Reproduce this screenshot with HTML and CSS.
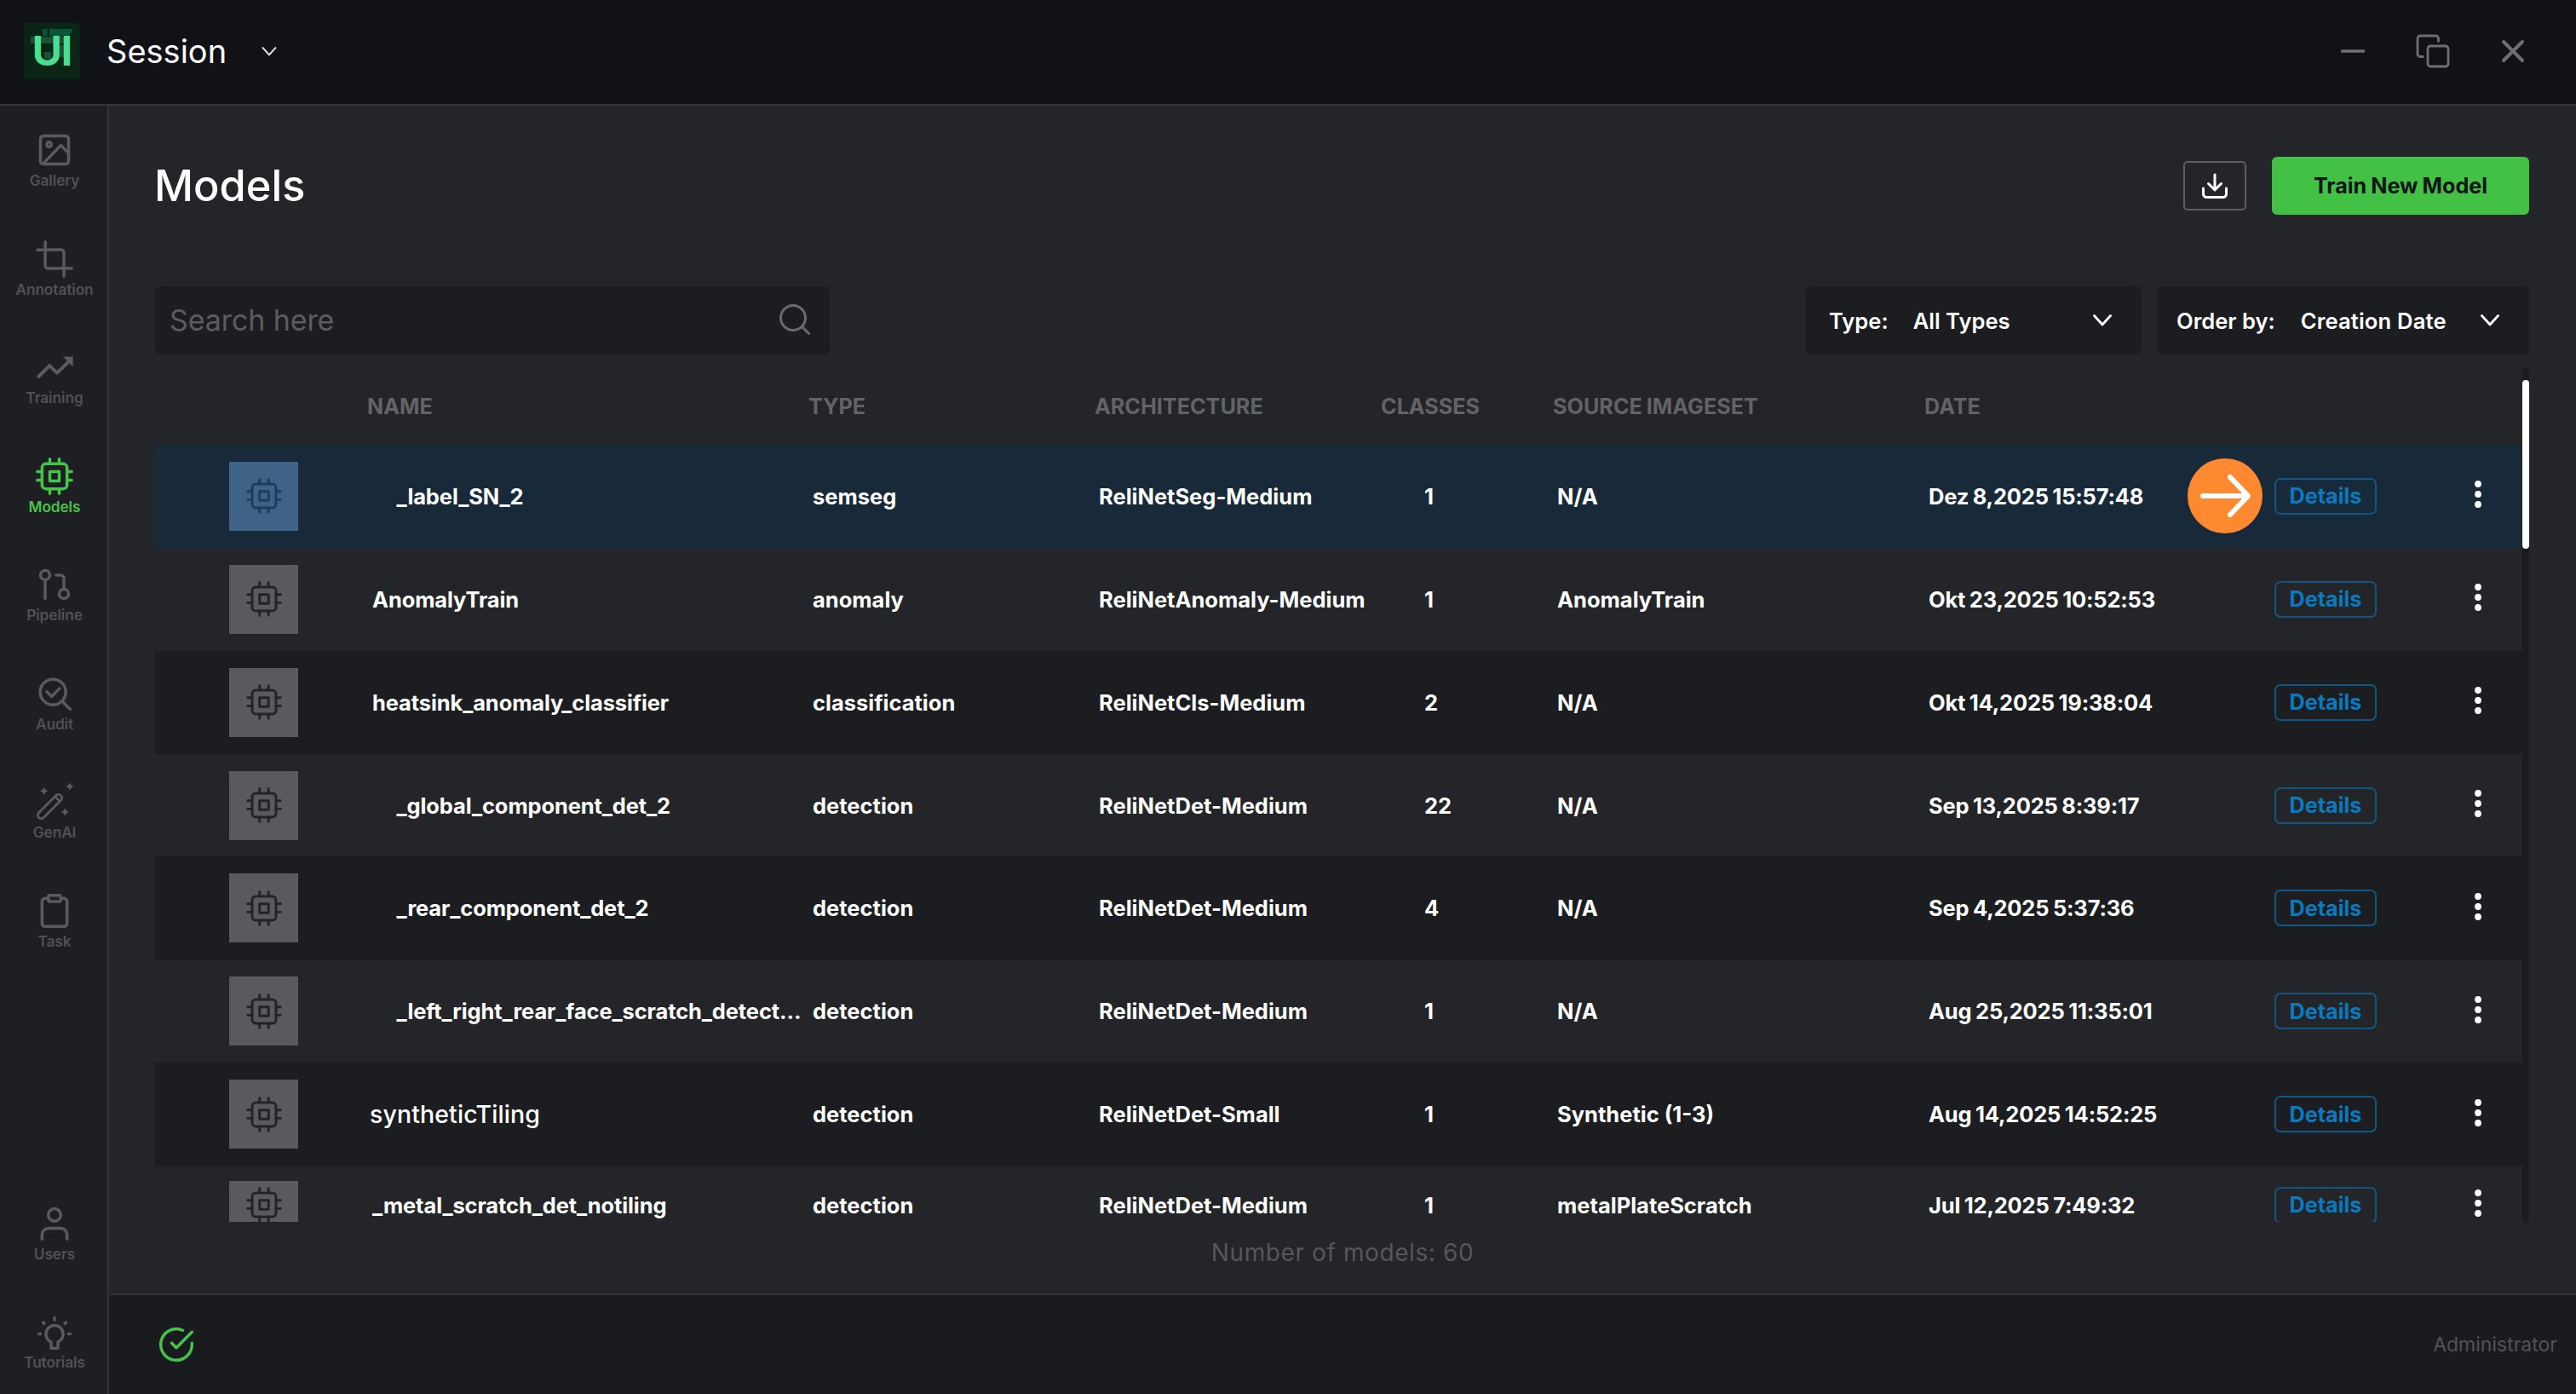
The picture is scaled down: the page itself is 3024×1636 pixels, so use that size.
FILE: index.html
```html
<!DOCTYPE html>
<html lang="en">
<head>
<meta charset="utf-8">
<title>Models</title>
<link rel="stylesheet" href="styles.css">
</head>
<body>
<svg class="defs" aria-hidden="true">
  <symbol id="cpu" viewBox="0 0 24 24"><rect x="4" y="4" width="16" height="16" rx="2.4"/><rect x="9" y="9" width="6" height="6"/><path d="M9 1v3M15 1v3M9 20v3M15 20v3M20 9h3M20 14.5h3M1 9h3M1 14.5h3"/></symbol>
  <symbol id="chevron" viewBox="0 0 22 14"><path d="M1.5 1.5 11 12l9.500-10.500"/></symbol>
  <symbol id="dots" viewBox="0 0 8 32"><circle cx="4" cy="4" r="3.900"/><circle cx="4" cy="16" r="3.900"/><circle cx="4" cy="28" r="3.900"/></symbol>
</svg>

<header class="topbar">
  <div class="logo">
    <svg class="logo-art" viewBox="0 0 66 66"><path fill="#0a5638" d="M22 7h5.500v8H22zM30 7h28l-5 8H30z"/><path fill="#1d5036" d="M8 16h46v8H8zM40 26h14v14H40zM24 34h8v8h-8z"/></svg>
    <span class="logo-text">UI</span>
  </div>
  <span class="session">Session</span>
  <svg class="session-chevron"><use href="#chevron"/></svg>
  <div class="window-buttons">
    <svg class="win-min" viewBox="0 0 28 4"><path d="M1.500 2h25"/></svg>
    <svg class="win-copy" viewBox="0 0 40 40"><rect x="14" y="14" width="24" height="24" rx="3"/><path d="M8.500 26.500H5a3 3 0 0 1-3-3V5a3 3 0 0 1 3-3h18.500a3 3 0 0 1 3 3v3.500"/></svg>
    <svg class="win-close" viewBox="0 0 28 28"><path d="M3 3l22 22M25 3 3 25"/></svg>
  </div>
</header>

<div class="body">
  <nav class="sidebar">
    <a class="nav-item"><svg viewBox="0 0 24 24"><rect x="3" y="3" width="18" height="18" rx="2"/><circle cx="8.500" cy="8.500" r="1.500"/><path d="M21 14l-5-5L5 20.500"/></svg><span>Gallery</span></a>
    <a class="nav-item"><svg viewBox="0 0 24 24"><path d="M6.130 1 6 16a2 2 0 0 0 2 2h15"/><path d="M1 6.130 16 6a2 2 0 0 1 2 2v15"/></svg><span>Annotation</span></a>
    <a class="nav-item"><svg class="trend" viewBox="0 0 24 24"><path d="M1.800 18 8.800 11l4.800 4.600L21.500 8"/><path class="solid" d="M17.300 5.200h6.500v6.500z"/></svg><span>Training</span></a>
    <a class="nav-item active"><svg viewBox="0 0 24 24"><use href="#cpu"/></svg><span>Models</span></a>
    <a class="nav-item"><svg viewBox="0 0 24 24"><circle cx="18" cy="18" r="3"/><circle cx="6" cy="6" r="3"/><path d="M13 6h3a2 2 0 0 1 2 2v7M6 9v12"/></svg><span>Pipeline</span></a>
    <a class="nav-item"><svg viewBox="0 0 24 24"><circle cx="11" cy="11" r="8.200"/><path d="M17 17l5 5M7 10.800l3.200 3 5-5"/></svg><span>Audit</span></a>
    <a class="nav-item"><svg class="wand" viewBox="0 0 24 24"><rect x="-2.200" y="-10" width="4.400" height="20" rx="2.200" transform="translate(9 15) rotate(45)"/><path d="M12.400 8.700l3.100 3.100"/><path class="solid" d="M21.800-.3l.900 1.600 1.600.900-1.600.900-.900 1.600-.900-1.600-1.600-.900 1.600-.900zM5.300 2.600l.900 1.600 1.600.900-1.600.900-.900 1.600-.900-1.600-1.600-.900 1.600-.900zM18.700 16l.900 1.600 1.600.900-1.600.900-.900 1.600-.900-1.600-1.600-.900 1.600-.900z"/></svg><span>GenAI</span></a>
    <a class="nav-item"><svg viewBox="0 0 24 24"><path d="M16 4h2a2 2 0 0 1 2 2v14a2 2 0 0 1-2 2H6a2 2 0 0 1-2-2V6a2 2 0 0 1 2-2h2"/><rect x="8" y="2" width="8" height="4" rx="1"/></svg><span>Task</span></a>
    <div class="nav-spacer"></div>
    <a class="nav-item"><svg viewBox="0 0 24 24"><path d="M20 22v-3a4 4 0 0 0-4-4H8a4 4 0 0 0-4 4v3"/><circle cx="12" cy="6.500" r="4"/></svg><span>Users</span></a>
    <a class="nav-item"><svg viewBox="0 0 24 24"><path d="M9.800 22.500v-4a5.500 5.500 0 1 1 4.400 0v4zM12 3v1.500M4.700 6l.700.700M19.300 6l-.700.700M2 13.300h1M21 13.300h1"/></svg><span>Tutorials</span></a>
  </nav>

  <div class="content">
    <main class="main">
      <div class="title-row">
        <h1>Models</h1>
        <button class="download"><svg viewBox="0 0 30 30"><path d="M15 2v17.500M7.500 12.500 15 20l7.500-7.500M1.500 18v6.500a4 4 0 0 0 4 4h19a4 4 0 0 0 4-4V18"/></svg></button>
        <button class="train">Train New Model</button>
      </div>

      <div class="toolbar">
        <div class="search"><span>Search here</span><svg viewBox="0 0 36 36"><circle cx="16" cy="16" r="14.500"/><path d="M26.500 26.500l8 8"/></svg></div>
        <div class="select type"><span class="label">Type:</span><span class="value">All Types</span><svg><use href="#chevron"/></svg></div>
        <div class="select order"><span class="label">Order by:</span><span class="value">Creation Date</span><svg><use href="#chevron"/></svg></div>
      </div>

      <div class="table">
        <div class="rows">
          <div class="row head"><span></span><span>NAME</span><span>TYPE</span><span>ARCHITECTURE</span><span>CLASSES</span><span>SOURCE IMAGESET</span><span>DATE</span></div>
          <div class="row selected">
            <div class="thumb"><svg><use href="#cpu"/></svg></div><span class="name child">_label_SN_2</span><span class="cell">semseg</span><span class="cell">ReliNetSeg-Medium</span><span class="cell count">1</span><span class="cell">N/A</span><span class="cell date">Dez 8,2025 15:57:48</span>
            <div class="action"><button class="details">Details</button><div class="pointer"><svg viewBox="0 0 60 60"><path d="M4 30h52M36 8l21 22-21 22"/></svg></div></div><svg class="menu"><use href="#dots"/></svg>
          </div>
          <div class="row">
            <div class="thumb"><svg><use href="#cpu"/></svg></div><span class="name">AnomalyTrain</span><span class="cell">anomaly</span><span class="cell">ReliNetAnomaly-Medium</span><span class="cell count">1</span><span class="cell">AnomalyTrain</span><span class="cell date">Okt 23,2025 10:52:53</span>
            <div class="action"><button class="details">Details</button></div><svg class="menu"><use href="#dots"/></svg>
          </div>
          <div class="row dark">
            <div class="thumb"><svg><use href="#cpu"/></svg></div><span class="name">heatsink_anomaly_classifier</span><span class="cell">classification</span><span class="cell">ReliNetCls-Medium</span><span class="cell count">2</span><span class="cell">N/A</span><span class="cell date">Okt 14,2025 19:38:04</span>
            <div class="action"><button class="details">Details</button></div><svg class="menu"><use href="#dots"/></svg>
          </div>
          <div class="row">
            <div class="thumb"><svg><use href="#cpu"/></svg></div><span class="name child">_global_component_det_2</span><span class="cell">detection</span><span class="cell">ReliNetDet-Medium</span><span class="cell count">22</span><span class="cell">N/A</span><span class="cell date">Sep 13,2025 8:39:17</span>
            <div class="action"><button class="details">Details</button></div><svg class="menu"><use href="#dots"/></svg>
          </div>
          <div class="row dark">
            <div class="thumb"><svg><use href="#cpu"/></svg></div><span class="name child">_rear_component_det_2</span><span class="cell">detection</span><span class="cell">ReliNetDet-Medium</span><span class="cell count">4</span><span class="cell">N/A</span><span class="cell date">Sep 4,2025 5:37:36</span>
            <div class="action"><button class="details">Details</button></div><svg class="menu"><use href="#dots"/></svg>
          </div>
          <div class="row">
            <div class="thumb"><svg><use href="#cpu"/></svg></div><span class="name child">_left_right_rear_face_scratch_detect…</span><span class="cell">detection</span><span class="cell">ReliNetDet-Medium</span><span class="cell count">1</span><span class="cell">N/A</span><span class="cell date">Aug 25,2025 11:35:01</span>
            <div class="action"><button class="details">Details</button></div><svg class="menu"><use href="#dots"/></svg>
          </div>
          <div class="row dark">
            <div class="thumb"><svg><use href="#cpu"/></svg></div><span class="name renamed">syntheticTiling</span><span class="cell">detection</span><span class="cell">ReliNetDet-Small</span><span class="cell count">1</span><span class="cell">Synthetic (1-3)</span><span class="cell date">Aug 14,2025 14:52:25</span>
            <div class="action"><button class="details">Details</button></div><svg class="menu"><use href="#dots"/></svg>
          </div>
          <div class="row last">
            <div class="thumb"><svg><use href="#cpu"/></svg></div><span class="name">_metal_scratch_det_notiling</span><span class="cell">detection</span><span class="cell">ReliNetDet-Medium</span><span class="cell count">1</span><span class="cell">metalPlateScratch</span><span class="cell date">Jul 12,2025 7:49:32</span>
            <div class="action"><button class="details">Details</button></div><svg class="menu"><use href="#dots"/></svg>
          </div>
        </div>
        <div class="scrollbar"><div class="scroll-thumb"></div></div>
      </div>
      <p class="total">Number of models: 60</p>
    </main>

    <footer class="footer">
      <svg viewBox="0 0 24 24"><path d="M22 11.100V12a10 10 0 1 1-5.930-9.140"/><path d="M22 4 12 14l-3-3"/></svg>
      <span>Administrator</span>
    </footer>
  </div>
</div>
</body>
</html>
```

FILE: styles.css
```css
* { box-sizing: border-box; }

body {
  margin: 0;
  height: 1636px;
  display: flex;
  flex-direction: column;
  overflow: hidden;
  background: #232528;
  color: #fff;
  font-family: Inter, "Liberation Sans", sans-serif;
}

svg { display: block; fill: none; stroke: currentColor; stroke-linecap: round; stroke-linejoin: round; }
button { margin: 0; padding: 0; border: 0; background: none; font: inherit; color: inherit; }
.defs { position: absolute; width: 0; height: 0; }
.solid { fill: currentColor; stroke: none; }

/* Top bar */
.topbar {
  flex: none;
  height: 124px;
  display: flex;
  align-items: center;
  padding: 0 60px 2px 28px;
  border-bottom: 2px solid #333438;
  background: #111216;
}
.logo {
  display: grid;
  place-items: center;
  width: 66px;
  height: 66px;
  border-radius: 2px;
  background: #0a2415;
}
.logo > * { grid-area: 1 / 1; }
.logo-art { width: 66px; height: 66px; stroke: none; }
.logo-text { font-size: 48px; font-weight: 700; line-height: 66px; letter-spacing: -1px; color: #4ade91; }
.session { margin-left: 31px; font-size: 38px; line-height: 48px; }
.session-chevron { width: 18px; height: 11px; margin-left: 41px; stroke-width: 2.6; color: #e4e4e6; }
.window-buttons { margin-left: auto; display: flex; align-items: center; gap: 60px; color: #6e6f72; }
.win-min { width: 28px; height: 4px; stroke-width: 3.6; }
.win-copy { width: 40px; height: 40px; stroke-width: 2.8; }
.win-close { width: 28px; height: 28px; stroke-width: 4; }

.body { flex: 1; display: flex; min-height: 0; }

/* Sidebar */
.sidebar {
  flex: none;
  width: 128px;
  display: flex;
  flex-direction: column;
  gap: 59.5px;
  padding: 30px 0 27px;
  border-right: 2px solid #323337;
  background: #1e1f22;
}
.nav-item { display: flex; flex-direction: column; align-items: center; gap: 4px; padding-left: 2px; color: #5a5b5e; }
.nav-item svg { width: 44px; height: 44px; stroke-width: 1.9; overflow: visible; }
.nav-item .wand { stroke-width: 1.5; }
.nav-item .trend { stroke-width: 2.2; }
.nav-item span { font-size: 17.3px; font-weight: 600; line-height: 20px; letter-spacing: -0.1px; color: #505154; }
.nav-item.active, .nav-item.active span { color: #45c449; }
.nav-spacer { flex: 1; margin-bottom: -59.5px; }

.content { flex: 1; display: flex; flex-direction: column; min-width: 0; }
.main { flex: 1; display: flex; flex-direction: column; padding: 60px 55px 0 54px; }

/* Title row */
.title-row { display: flex; align-items: center; height: 68px; }
h1 { margin: 0 auto 0 -1px; font-size: 50.5px; font-weight: 500; line-height: 60px; }
.download {
  display: grid;
  place-items: center;
  width: 74px;
  height: 58px;
  border: 2.5px solid #5c5d60;
  border-radius: 5px;
}
.download svg { width: 30px; height: 30px; stroke-width: 3; }
.train {
  width: 302px;
  height: 68px;
  margin-left: 30px;
  border-radius: 6px;
  background: #42c145;
  color: #101416;
  font-size: 25.2px;
  font-weight: 700;
  word-spacing: -1px;
}

/* Search and filters */
.toolbar { display: flex; gap: 18px; height: 80px; margin-top: 84px; }
.search, .select { display: flex; align-items: center; border-radius: 6px; background: #1c1d20; }
.search {
  width: 792px;
  margin-right: auto;
  padding: 0 23px 2px 17px;
  justify-content: space-between;
  color: #5b5c5f;
  font-size: 34px;
  letter-spacing: -0.1px;
}
.search svg { width: 36px; height: 36px; stroke-width: 3; color: #6a6b6e; }
.select { font-size: 25.6px; font-weight: 600; }
.select svg { width: 22px; height: 14px; margin-left: auto; stroke-width: 2.8; }
.type { width: 394px; padding: 0 35px 0 27px; }
.type .value { margin-left: 29px; }
.order { width: 437px; padding: 0 35px 0 23px; }
.order .value { margin-left: 30px; letter-spacing: 0.15px; }

/* Table */
.table { display: flex; height: 1002px; margin-top: 16px; overflow: hidden; }
.rows { flex: 1; }
.row {
  display: grid;
  grid-template-columns: 249px 518px 336px 336px 202px 436px 411px 200px 78px;
  align-items: center;
  height: 120.86px;
  font-size: 25.5px;
  font-weight: 700;
  white-space: nowrap;
}
.row.head { height: 90px; font-size: 25.2px; color: #626366; word-spacing: -1px; }
.row.dark { background: #1c1d20; }
.row.selected { background: #182a39; }
.row.last { height: 92px; }
.thumb {
  display: grid;
  place-items: center;
  width: 81px;
  height: 81px;
  margin-left: 87px;
  background: #595a5d;
  color: #232427;
}
.thumb svg { width: 42px; height: 42px; stroke-width: 1.7; }
.selected .thumb { background: #3e6384; color: #193f60; }
.last .thumb { height: 56px; }
.name { padding-left: 6px; letter-spacing: -0.12px; }
.name.child { padding-left: 34.5px; }
.name.renamed { padding-left: 3px; font-size: 28.5px; font-weight: 500; letter-spacing: 0.1px; }
.cell { padding-left: 5px; }
.cell.count { padding-left: 51px; }
.cell.date { letter-spacing: -0.2px; word-spacing: -1.2px; }
.action { display: flex; align-items: center; position: relative; }
.details {
  width: 120px;
  height: 43px;
  border: 2px solid #135582;
  border-radius: 7px;
  color: #0a7abf;
  font-size: 25.2px;
  font-weight: 700;
  line-height: 36px;
}
.pointer {
  position: absolute;
  left: -102px;
  display: grid;
  place-items: center;
  width: 88px;
  height: 88px;
  border-radius: 50%;
  background: #ff8931;
}
.pointer svg { width: 60px; height: 60px; stroke-width: 6; }
.menu { width: 8px; height: 32px; margin: -4px auto 0; fill: #fff; stroke: none; }

.scrollbar { width: 8px; padding-top: 14px; border-radius: 4px; background: #1b1c1f; }
.scroll-thumb { height: 198px; border-radius: 4px; background: #fff; }

.total {
  margin: 18px 0 0 1px;
  font-size: 28px;
  line-height: 36px;
  letter-spacing: 0.6px;
  text-align: center;
  color: #56575a;
}

/* Status bar */
.footer {
  flex: none;
  height: 118px;
  display: flex;
  align-items: center;
  justify-content: space-between;
  padding: 0 22px 0 57px;
  border-top: 2px solid #323337;
  background: #1a1b1e;
  color: #525356;
  font-size: 23px;
}
.footer svg { width: 44px; height: 44px; stroke-width: 1.9; color: #45c449; }
```
